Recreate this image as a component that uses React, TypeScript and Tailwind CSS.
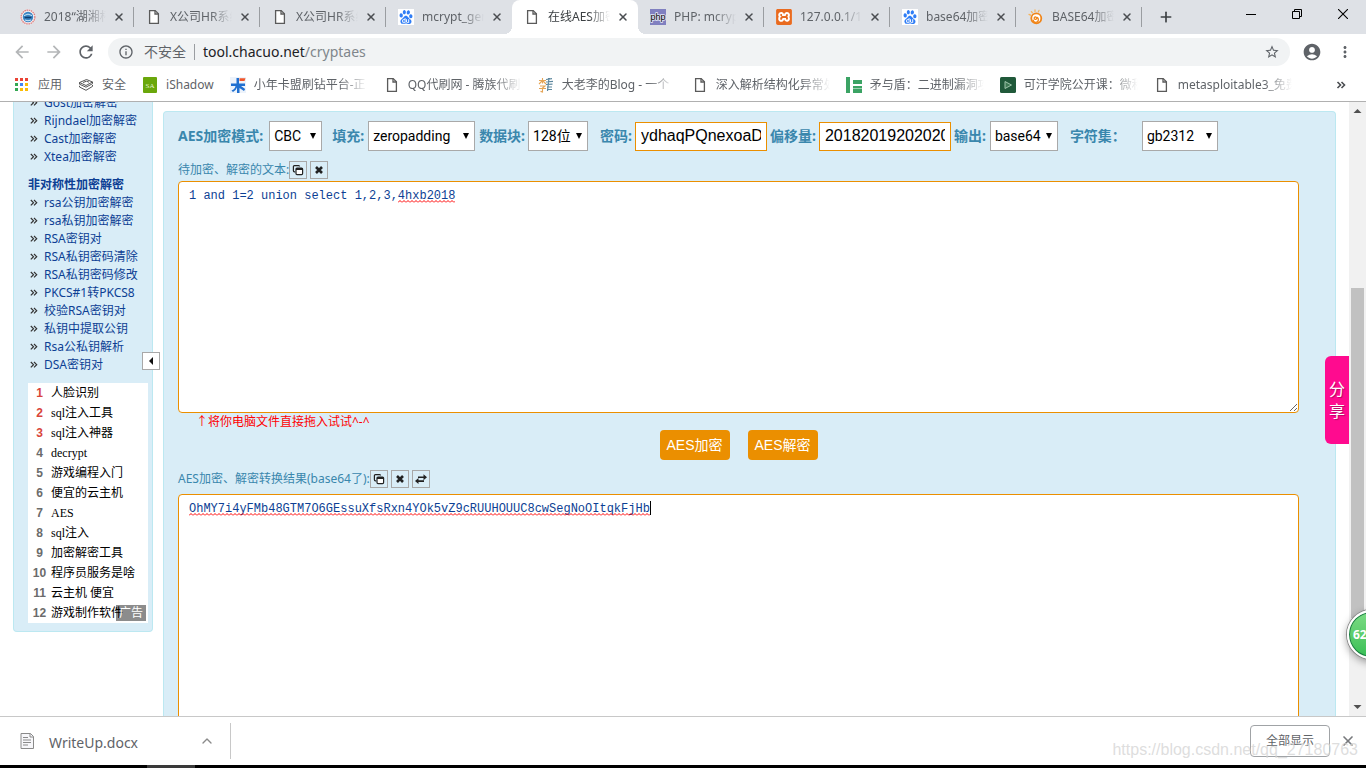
import type { ReactNode } from "react";
import {
  MdAccountCircle,
  MdArrowBack,
  MdArrowForward,
  MdMoreVert,
  MdOutlineInfo,
  MdRefresh,
  MdStarBorder,
} from "react-icons/md";
import { SiBaidu, SiXampp } from "react-icons/si";
import { ChevronUp, Plus, X } from "lucide-react";

/* ---------- icons ---------- */

function FileIcon() {
  return (
    <svg viewBox="0 0 16 16" className="size-4 shrink-0" fill="none" stroke="#5a5a5a" strokeWidth="1.3">
      <path d="M3.6 1.6h5.6l3.2 3.2v9.6H3.6z" fill="#fff" />
      <path d="M9 1.6v3.4h3.4" />
    </svg>
  );
}

function BaiduIcon() {
  return (
    <span className="grid size-4 shrink-0 place-items-center bg-white">
      <SiBaidu className="size-[14px] text-[#2f7df6]" />
    </span>
  );
}

function SchoolIcon() {
  return (
    <svg viewBox="0 0 16 16" className="size-4 shrink-0">
      <circle cx="8" cy="8" r="7.8" fill="#f6eef0" />
      <circle cx="8" cy="8" r="6.9" fill="none" stroke="#d98080" strokeWidth="1.3" strokeDasharray="1.6 .6" />
      <circle cx="8" cy="8" r="5.2" fill="#3b86c4" />
      <path d="M4 6.6q4-3 8 0M5 11q3 1.600 6 0" stroke="#cfe8f7" fill="none" />
      <path d="M4.600 8.500h6.800" stroke="#123e70" strokeWidth="1.600" />
    </svg>
  );
}

function PhpIcon() {
  return (
    <svg viewBox="0 0 16 16" className="size-4 shrink-0">
      <rect width="16" height="16" fill="#8080c0" />
      <text
        x="8"
        y="10.6"
        textAnchor="middle"
        fontFamily="Liberation Sans, sans-serif"
        fontSize="9"
        stroke="#e8e8f8"
        strokeWidth="1.6"
        paintOrder="stroke"
        fill="#000"
      >
        php
      </text>
    </svg>
  );
}

function XamppIcon() {
  return (
    <span className="grid size-4 shrink-0 place-items-center rounded-xs bg-white">
      <SiXampp className="size-4 text-[#e96b20]" />
    </span>
  );
}

function SunIcon() {
  return (
    <svg viewBox="0 0 16 16" className="size-4 shrink-0" fill="none" stroke="#f08519" strokeLinecap="round">
      <circle cx="8.300" cy="9.300" r="5" strokeWidth="1.800" fill="#fff" />
      <path d="M8.600 9.200a1.200 1.200 0 1 1-.8-1.100 2.600 2.600 0 1 1-2.600 3" strokeWidth="1.300" />
      <path d="M1 5.400l1.600.8M3.400 2.600l1 1.200M7 1v1.600M11 1.400l-.6 1.400" stroke="#f6b45c" strokeWidth="1.300" />
    </svg>
  );
}

const APP_COLORS = ["#ea4335", "#ea4335", "#ea4335", "#34a853", "#4285f4", "#fbbc05", "#34a853", "#fbbc05", "#fbbc05"];

function AppsIcon() {
  return (
    <svg viewBox="0 0 16 16" className="size-4 shrink-0">
      {APP_COLORS.map((c, i) => (
        <rect key={i} x={1 + (i % 3) * 5} y={1 + Math.floor(i / 3) * 5} width="3" height="3" fill={c} />
      ))}
    </svg>
  );
}

function LayersIcon() {
  return (
    <svg viewBox="0 0 16 16" className="size-4 shrink-0" fill="none" stroke="#555" strokeWidth="1">
      <path d="M1.500 5.500L8.500 2.500l6 2.500-6.500 3.500z" />
      <path d="M1.500 5.500v1.700l6.500 3 6.500-3.500V5M1.500 8.800v1.200l6.500 3.300 6.500-3.900V8" />
      <path d="M5 5.500l3.500-1.300 2.500 1" />
    </svg>
  );
}

function ShadowIcon() {
  return (
    <svg viewBox="0 0 16 16" className="size-4 shrink-0">
      <rect x="1" width="14" height="16" rx="1" fill="#6aa70b" />
      <text x="8" y="10.500" textAnchor="middle" fontFamily="Liberation Serif, serif" fontSize="7" fill="#e6f3cf">
        SA
      </text>
    </svg>
  );
}

function KaIcon() {
  return (
    <svg viewBox="0 0 16 16" className="size-4 shrink-0">
      <path d="M0 0h16v16H0z" fill="#edf3fb" />
      <path d="M6.500 1v5.500H1v2.500h4.500Q5 12 1.500 13.500L3 15q3-1.600 4-4.500V16h2.500v-5l4.500 3 1.200-2L11 9h4V6.500H9V1z" fill="#1f6fd0" />
      <path d="M9.500 1.200h6L14.500 4h-5z" fill="#f0562a" />
    </svg>
  );
}

function LiIcon() {
  return (
    <svg viewBox="0 0 16 16" className="size-4 shrink-0" fill="none">
      <path d="M1 3.500h7M4.500 1v5.500M4.500 3.500L1 7M4.500 3.500L8 7M2 9h5L4.500 11v4l-2-.6M1 11.500h7" stroke="#e5a455" strokeWidth="1.100" />
      <path d="M8 2.500l6-.8M8 5l7-.6M8 7.500l6.500-.4M9 10h5M9 12.500h5M11 1L9.500 14" stroke="#5c879e" strokeWidth="1.200" />
    </svg>
  );
}

function ShieldIcon() {
  return (
    <svg viewBox="0 0 16 16" className="size-4 shrink-0" fill="#3ba364">
      <path d="M0 0h4v16H0zM7 3h9v4H7zM7 9h9v2.500H7zM7 12h9v4H7z" />
    </svg>
  );
}

function KhanIcon() {
  return (
    <svg viewBox="0 0 16 16" className="size-4 shrink-0">
      <rect width="16" height="16" rx="1.500" fill="#20593a" />
      <path d="M5 4.500l6.500 3.500L5 11.500z" fill="#3f7a55" stroke="#a9cdb4" strokeWidth=".9" />
    </svg>
  );
}

function CopyGlyph() {
  return (
    <svg viewBox="0 0 12 12" className="size-3" fill="none" stroke="#222" strokeWidth="1.200">
      <path d="M3.200 7.800H2.400Q1.400 7.800 1.400 6.800V2.700Q1.400 1.600 2.400 1.600H6.600Q7.600 1.600 7.600 2.600" />
      <rect x="4" y="4" width="6.600" height="6.600" rx="1" fill="#fff" />
      <path d="M4 5h6.600" strokeWidth="2" />
    </svg>
  );
}

function CrossGlyph() {
  return (
    <svg viewBox="0 0 12 12" className="size-3" stroke="#222" strokeWidth="2.600">
      <path d="M3 3l6 6M9 3L3 9" />
    </svg>
  );
}

function SwapGlyph() {
  return (
    <svg viewBox="0 0 12 12" className="size-3" fill="#222">
      <path d="M8.500 1.200l3.500 3-3.500 3V5.100H3V3.400h5.500zM3.500 5l-3.500 3 3.500 3V8.900H9V7.200H3.500z" />
    </svg>
  );
}

/* ---------- data ---------- */

const TABS: { title: string; icon: ReactNode; active?: boolean; line?: boolean }[] = [
  { title: "2018“湖湘杯", icon: <SchoolIcon />, line: true },
  { title: "X公司HR系统", icon: <FileIcon />, line: true },
  { title: "X公司HR系统", icon: <FileIcon />, line: true },
  { title: "mcrypt_gene", icon: <BaiduIcon /> },
  { title: "在线AES加密", icon: <FileIcon />, active: true },
  { title: "PHP: mcrypt", icon: <PhpIcon />, line: true },
  { title: "127.0.0.1/1", icon: <XamppIcon />, line: true },
  { title: "base64加密", icon: <BaiduIcon />, line: true },
  { title: "BASE64加密", icon: <SunIcon />, line: true },
];

const BOOKMARKS: { title: string; icon: ReactNode; long?: boolean }[] = [
  { title: "应用", icon: <AppsIcon /> },
  { title: "安全", icon: <LayersIcon /> },
  { title: "iShadow", icon: <ShadowIcon /> },
  { title: "小年卡盟刷钻平台-正", icon: <KaIcon />, long: true },
  { title: "QQ代刷网 - 腾族代刷", icon: <FileIcon />, long: true },
  { title: "大老李的Blog - 一个", icon: <LiIcon />, long: true },
  { title: "深入解析结构化异常处", icon: <FileIcon />, long: true },
  { title: "矛与盾：二进制漏洞攻", icon: <ShieldIcon />, long: true },
  { title: "可汗学院公开课：微积", icon: <KhanIcon />, long: true },
  { title: "metasploitable3_免费", icon: <FileIcon />, long: true },
];

const SYMMETRIC = ["Gost加密解密", "Rijndael加密解密", "Cast加密解密", "Xtea加密解密"];

const ASYMMETRIC = [
  "rsa公钥加密解密",
  "rsa私钥加密解密",
  "RSA密钥对",
  "RSA私钥密码清除",
  "RSA私钥密码修改",
  "PKCS#1转PKCS8",
  "校验RSA密钥对",
  "私钥中提取公钥",
  "Rsa公私钥解析",
  "DSA密钥对",
];

const ADS = [
  "人脸识别",
  "sql注入工具",
  "sql注入神器",
  "decrypt",
  "游戏编程入门",
  "便宜的云主机",
  "AES",
  "sql注入",
  "加密解密工具",
  "程序员服务是啥",
  "云主机 便宜",
  "游戏制作软件",
];

/* ---------- browser frame ---------- */

function TabStrip() {
  return (
    <div className="flex h-[34px] shrink-0 bg-[#dee1e6] pl-2">
      {TABS.map((tab, i) => (
        <div
          key={i}
          className={
            tab.active
              ? "relative flex w-[126px] items-center rounded-t-lg bg-white pl-3 text-[#3c4043] before:absolute before:bottom-0 before:-left-2 before:size-2 before:bg-[radial-gradient(circle_at_0_0,transparent_8px,white_8px)] after:absolute after:-right-2 after:bottom-0 after:size-2 after:bg-[radial-gradient(circle_at_100%_0,transparent_8px,white_8px)]"
              : "relative flex w-[126px] items-center pl-3 text-[#5f6368]"
          }
        >
          {tab.icon}
          <span className="ml-2 w-[62px] overflow-hidden text-xs whitespace-nowrap [mask-image:linear-gradient(to_right,black_65%,transparent)]">
            {tab.title}
          </span>
          <button aria-label="关闭标签页" className="ml-[5px] grid size-4 place-items-center">
            <X className="size-3 text-[#4a4d51]" strokeWidth={3} />
          </button>
          {tab.line && <span className="ml-auto h-5 w-px bg-[#9a9da1]" />}
        </div>
      ))}
      <button aria-label="新标签页" className="ml-3 grid w-6 place-items-center">
        <Plus className="size-4 text-[#3c4043]" strokeWidth={2.5} />
      </button>
      <div className="ml-auto flex h-7">
        <button aria-label="最小化" className="grid w-[46px] place-items-center">
          <svg viewBox="0 0 10 10" className="size-2.5" stroke="#000">
            <path d="M0 5.500h10" />
          </svg>
        </button>
        <button aria-label="还原" className="grid w-[46px] place-items-center">
          <svg viewBox="0 0 10 10" className="size-2.5" fill="none" stroke="#000">
            <path d="M.5 2.500h7v7h-7zM2.500 2.500v-2h7v7h-2" />
          </svg>
        </button>
        <button aria-label="关闭" className="grid w-[46px] place-items-center">
          <svg viewBox="0 0 10 10" className="size-2.5" stroke="#000" strokeWidth="1.100">
            <path d="M0 0l10 10M10 0L0 10" />
          </svg>
        </button>
      </div>
    </div>
  );
}

function Toolbar() {
  return (
    <div className="flex h-9 shrink-0 items-center pr-3 pl-3 text-[#5f6368]">
      <button aria-label="后退" className="mr-3 text-[#b4b6b8]">
        <MdArrowBack className="size-5" />
      </button>
      <button aria-label="前进" className="mr-3 text-[#b4b6b8]">
        <MdArrowForward className="size-5" />
      </button>
      <button aria-label="重新加载" className="mr-3">
        <MdRefresh className="size-5" />
      </button>
      <div className="flex h-7 flex-1 items-center rounded-full bg-[#f1f3f4] px-2.5 text-sm">
        <MdOutlineInfo className="mr-2.5 size-4" />
        <span>不安全</span>
        <span className="mx-2 h-4 w-px bg-[#9a9da1]" />
        <span className="flex-1">
          <span className="text-[#202124]">tool.chacuo.net</span>
          <span className="text-[#80868b]">/cryptaes</span>
        </span>
        <button aria-label="收藏">
          <MdStarBorder className="size-4" />
        </button>
      </div>
      <button aria-label="用户" className="ml-3">
        <MdAccountCircle className="size-5" />
      </button>
      <button aria-label="菜单" className="ml-3.5">
        <MdMoreVert className="size-[18px]" />
      </button>
    </div>
  );
}

function BookmarkBar() {
  return (
    <div className="flex h-8 shrink-0 items-center gap-4 border-b border-[#b0b0b0] pr-5 pb-0.5 pl-3.5 text-xs text-[#5f6368]">
      {BOOKMARKS.map((b) => (
        <a key={b.title} href="#" className="flex items-center gap-2 whitespace-nowrap">
          {b.icon}
          {b.long ? (
            <span className="w-[114px] overflow-hidden [mask-image:linear-gradient(to_right,black_75%,transparent)]">
              {b.title}
            </span>
          ) : (
            <span>{b.title}</span>
          )}
        </a>
      ))}
      <button aria-label="更多书签" className="ml-auto">
        <svg viewBox="0 0 10 10" className="size-2.5" fill="none" stroke="#4a4d51" strokeWidth="1.600">
          <path d="M1.500 2l3 3-3 3M5.500 2l3 3-3 3" />
        </svg>
      </button>
    </div>
  );
}

function Scrollbar() {
  return (
    <div className="flex w-[17px] shrink-0 flex-col items-center bg-[#f1f1f1]">
      <svg viewBox="0 0 17 17" className="size-[17px]" fill="#505050">
        <path d="M4.500 11h8l-4-4z" />
      </svg>
      <div className="mt-[169px] h-[330px] w-[13px] bg-[#c1c1c1]" />
      <svg viewBox="0 0 17 17" className="mt-auto size-[17px]" fill="#505050">
        <path d="M4.500 6h8l-4 4z" />
      </svg>
    </div>
  );
}

function DownloadBar() {
  return (
    <div className="flex h-[49px] shrink-0 items-center border-t border-[#c8c8c8] bg-white text-[#5f6368]">
      <svg viewBox="0 0 14 18" className="ml-5 h-[18px] w-3.5" fill="none" stroke="#8a8a8a">
        <path d="M1 1.500h9.500l3 3v12H1z" fill="#f7f7fa" />
        <path d="M10 1.500v3.500h3.500M3 5.500h5M3 8h8M3 10.500h8M3 13h5" />
      </svg>
      <span className="ml-[15px] w-[150px] pt-1 text-sm">WriteUp.docx</span>
      <button aria-label="下载选项" className="grid size-4 place-items-center">
        <ChevronUp className="size-4 text-[#8a8a8a]" />
      </button>
      <span className="ml-[15px] h-9 w-px bg-[#c8c8c8]" />
      <button className="ml-auto h-8 w-20 rounded border border-[#a0a3a6] text-xs">全部显示</button>
      <button aria-label="关闭下载栏" className="mr-2.5 ml-2.5">
        <X className="size-4 text-[#77797c]" strokeWidth={2.5} />
      </button>
    </div>
  );
}

/* ---------- page ---------- */

function SideLinks({ items }: { items: string[] }) {
  return (
    <ul>
      {items.map((item) => (
        <li key={item} className="flex h-[18px] items-center gap-1.5 pl-0.5">
          <svg viewBox="0 0 8 8" className="size-2 shrink-0" fill="none" stroke="#333" strokeWidth="1.200">
            <path d="M.8 1l2.700 2.700L.8 6.400M4 1l2.700 2.700L4 6.400" />
          </svg>
          <a href="#" className="whitespace-nowrap">
            {item}
          </a>
        </li>
      ))}
    </ul>
  );
}

function Sidebar() {
  return (
    <aside className="relative -mt-2 w-[140px] shrink-0 self-start rounded-b border border-t-0 border-[#bce8f1] bg-[#d9edf7] px-3.5 pb-2 text-xs text-[#0d3f94]">
      <SideLinks items={SYMMETRIC} />
      <h2 className="mt-2.5 leading-[18px] font-bold">非对称性加密解密</h2>
      <SideLinks items={ASYMMETRIC} />
      <ol className="relative mt-[9px] w-[120px] bg-white text-black">
        {ADS.map((ad, i) => (
          <li key={ad} className="flex h-5 items-center gap-1">
            <span
              className={
                i < 3
                  ? "w-[19px] pl-1 text-center font-['Liberation_Sans',sans-serif] font-bold text-[#d9453a]"
                  : "w-[19px] pl-1 text-center font-['Liberation_Sans',sans-serif] font-bold whitespace-nowrap text-[#6b6b6b]"
              }
            >
              {i + 1}
            </span>
            <a href="#" className="font-['Liberation_Serif','Noto_Sans_CJK_SC',serif] whitespace-nowrap">
              {ad}
            </a>
          </li>
        ))}
        <li className="absolute right-0.5 bottom-0.5 bg-black/45 px-[3px] leading-4 text-white">广告</li>
      </ol>
      <button
        aria-label="收起侧栏"
        className="absolute right-[-8px] bottom-[261px] grid size-[18px] place-items-center border border-[#a8a8a8] bg-white"
      >
        <svg viewBox="0 0 6 8" className="h-2 w-1.5" fill="#111">
          <path d="M5 0v8L1 4z" />
        </svg>
      </button>
    </aside>
  );
}

function SelectField({ id, label, value, width, gap }: { id: string; label: string; value: string; width: string; gap: string }) {
  return (
    <div className={`flex items-center ${gap}`}>
      <label htmlFor={id} className="whitespace-nowrap">
        {label}
      </label>
      <div className={`relative ${width}`}>
        <select
          id={id}
          className="h-[30px] w-full appearance-none border border-[#a9a9a9] bg-white pl-1 font-[Roboto,'Noto_Sans_CJK_SC',sans-serif] text-sm font-normal text-black"
        >
          <option>{value}</option>
        </select>
        <svg viewBox="0 0 6 6" className="pointer-events-none absolute top-3 right-1.5 size-1.5" fill="#000">
          <path d="M0 0h6L3 6z" />
        </svg>
      </div>
    </div>
  );
}

function TextField({ id, label, value }: { id: string; label: string; value: string }) {
  return (
    <div className="flex items-center gap-[3px]">
      <label htmlFor={id} className="whitespace-nowrap">
        {label}
      </label>
      <input
        id={id}
        defaultValue={value}
        className="h-[29px] w-[132px] border border-[#eb8f00] bg-white px-[5px] font-['Liberation_Sans',sans-serif] text-base font-normal text-black outline-none"
      />
    </div>
  );
}

function MiniButton({ label, children }: { label: string; children: ReactNode }) {
  return (
    <button aria-label={label} className="grid size-[18px] place-items-center border border-[#a8a8a8]">
      {children}
    </button>
  );
}

// spell checker underline
function Squiggle({ id, className }: { id: string; className: string }) {
  return (
    <svg className={`pointer-events-none absolute h-[3px] font-['Liberation_Mono',monospace] text-xs ${className}`}>
      <pattern id={id} width="4" height="3" patternUnits="userSpaceOnUse">
        <path d="M0 2.500L2 .5l2 2" fill="none" stroke="#f00" />
      </pattern>
      <rect width="100%" height="3" fill={`url(#${id})`} />
    </svg>
  );
}

const AREA =
  "block w-full rounded border border-[#eb8f00] bg-white px-2.5 py-1 font-['Liberation_Mono','Noto_Sans_CJK_SC',monospace] text-xs leading-5 text-[#0d3f94] outline-none";

const ACTION = "h-[30px] w-[70px] rounded bg-[#eb8f00] font-['Liberation_Sans','Noto_Sans_CJK_SC',sans-serif]";

function Tool() {
  return (
    <main className="mt-[9px] flex-1 rounded-t border border-b-0 border-[#bce8f1] bg-[#d9edf7] pt-2 pr-9 pl-3.5 text-xs text-[#3a87ad]">
      <div className="flex h-8 items-center text-sm font-bold">
        <SelectField id="mode" label="AES加密模式:" value="CBC" width="w-[53px]" gap="gap-1.5 mr-2.5" />
        <SelectField id="pad" label="填充:" value="zeropadding" width="w-[107px]" gap="gap-1 mr-1" />
        <SelectField id="block" label="数据块:" value="128位" width="w-[60px]" gap="gap-[3px] mr-3" />
        <div className="mr-[3px] flex gap-[3px]">
          <TextField id="key" label="密码:" value="ydhaqPQnexoaD" />
          <TextField id="iv" label="偏移量:" value="20182019202020" />
        </div>
        <SelectField id="out" label="输出:" value="base64" width="w-[68px]" gap="gap-1 mr-3" />
        <SelectField id="charset" label="字符集：" value="gb2312" width="w-[76px]" gap="gap-4" />
      </div>

      <div className="mt-2 flex h-[21px] items-center pb-0.5">
        <label htmlFor="source">待加密、解密的文本:</label>
        <div className="flex gap-[3px]">
          <MiniButton label="复制">
            <CopyGlyph />
          </MiniButton>
          <MiniButton label="清空">
            <CrossGlyph />
          </MiniButton>
        </div>
      </div>
      <div className="relative">
        <textarea
          id="source"
          spellCheck={false}
          className={`h-[232px] ${AREA}`}
          defaultValue="1 and 1=2 union select 1,2,3,4hxb2018"
        />
        <Squiggle id="wave-source" className="top-[19px] left-[11px] ml-[29ch] w-[8ch]" />
      </div>
      <p className="pl-[18px] leading-[17px] text-[#f00]">↑将你电脑文件直接拖入试试^-^</p>
      <div className="flex justify-center gap-[18px] text-sm text-white">
        <button className={ACTION}>AES加密</button>
        <button className={ACTION}>AES解密</button>
      </div>

      <div className="mt-2 flex h-[26px] items-center pb-1">
        <label htmlFor="result">AES加密、解密转换结果(base64了):</label>
        <div className="flex gap-[3px]">
          <MiniButton label="复制结果">
            <CopyGlyph />
          </MiniButton>
          <MiniButton label="清空结果">
            <CrossGlyph />
          </MiniButton>
          <MiniButton label="交换">
            <SwapGlyph />
          </MiniButton>
        </div>
      </div>
      <div className="relative">
        <textarea
          id="result"
          spellCheck={false}
          className={`h-[240px] ${AREA}`}
          defaultValue="OhMY7i4yFMb48GTM7O6GEssuXfsRxn4YOk5vZ9cRUUHOUUC8cwSegNoOItqkFjHb"
        />
        <Squiggle id="wave-result" className="top-[19px] left-[11px] w-[64ch]" />
        <span className="absolute top-[7px] left-[11px] ml-[64ch] h-3.5 w-px bg-black font-['Liberation_Mono',monospace]" />
      </div>
    </main>
  );
}

export default function App() {
  return (
    <div className="relative flex h-screen flex-col overflow-hidden bg-white font-['Noto_Sans','Noto_Sans_CJK_SC',sans-serif]">
      <TabStrip />
      <Toolbar />
      <BookmarkBar />
      <div className="relative flex min-h-0 flex-1 overflow-hidden">
        <div className="flex min-w-0 flex-1 gap-2.5 px-[13px]">
          <Sidebar />
          <Tool />
        </div>
        <Scrollbar />
        <button className="absolute top-[254px] right-[17px] flex h-[88px] w-6 flex-col items-center justify-center rounded-l-md bg-[#ff0b8f] text-base leading-[22px] text-white [text-shadow:1px_1px_1px_rgba(0,0,0,0.3)]">
          <span>分</span>
          <span>享</span>
        </button>
        <div className="absolute top-[508px] right-[-30px] flex size-[49px] items-center rounded-full border-2 border-white bg-linear-to-b from-[#7bdc84] to-[#35bf55] pl-1 text-xs font-bold text-white shadow-[0_0_0_1px_#8a8a8a,inset_0_0_0_1px_#1d7a45,0_3px_8px_rgba(0,0,0,0.4)]">
          62
        </div>
      </div>
      <DownloadBar />
      <div className="h-[3px] shrink-0 bg-black pl-[147px]">
        <div className="h-full w-12 bg-[#3a3a3a]" />
      </div>
      <span className="pointer-events-none absolute right-2 bottom-1.5 font-['Liberation_Sans',sans-serif] text-base text-[#d5d5d5]/80">
        https://blog.csdn.net/qq_27180763
      </span>
    </div>
  );
}
